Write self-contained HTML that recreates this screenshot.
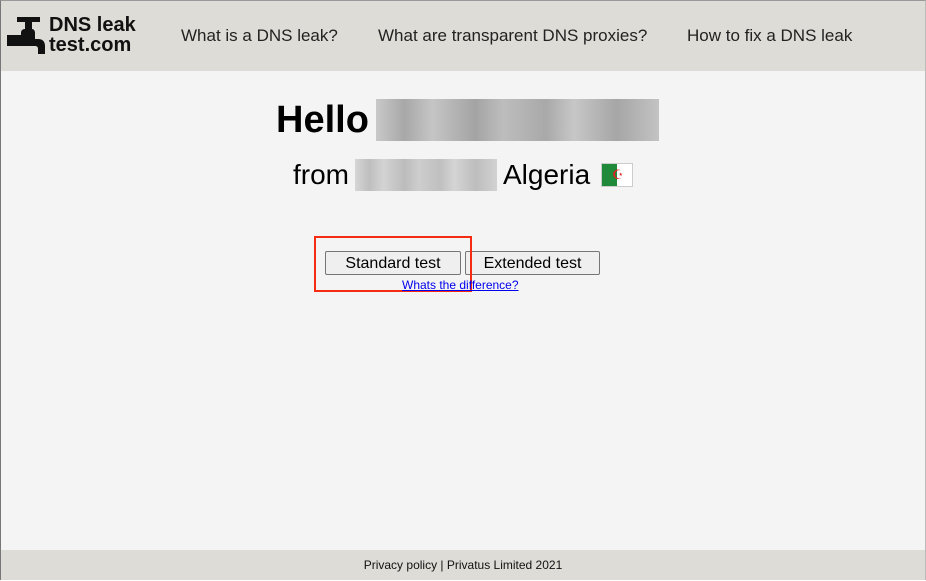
<!DOCTYPE html>
<html><head><style>
body{margin:0;width:926px;height:581px;overflow:hidden;background:#fff;font-family:"Liberation Sans",Arial,sans-serif;}
#pg{position:absolute;left:0;top:0;width:924px;height:579px;border-left:1px solid #777;border-top:1px solid #999;border-right:1px solid #bbb;background:#f4f4f4;}
#hd{position:absolute;left:0;top:0;width:924px;height:70px;background:#dddcd6;}
.nav{position:absolute;top:25px;font-size:17px;color:#222;}
#ft{position:absolute;left:0;top:549px;width:924px;height:30px;background:#dddcd6;font-size:12px;color:#111;text-align:center;line-height:30px;}
.blur{position:absolute;background:linear-gradient(90deg,#c9c9c9,#a8a8a8 10%,#c5c5c5 20%,#a4a4a4 35%,#bdbdbd 45%,#a9a9a9 60%,#c7c7c7 70%,#a6a6a6 85%,#c3c3c3);}
.btn{position:absolute;top:250px;height:24px;border:1px solid #767676;border-radius:2px;background:#efefef;font-size:16px;line-height:23px;text-align:center;color:#000;box-sizing:border-box;}
</style></head><body>
<div id="pg">
<div id="hd">
<svg style="position:absolute;left:5px;top:14px" width="40" height="42" viewBox="0 0 40 42">
<path d="M11 2h23v5h-8v7c2 0 3 2 3 4v6h3c5 0 7 3 7 7v8h-7v-5c0-2-1-3-3-3H1V20h14v-2c0-2 1-4 4-4V7h-8z" fill="#111"/>
</svg>
<div style="position:absolute;left:48px;top:14px;font-weight:bold;font-size:20px;line-height:20px;color:#111;">DNS leak<br>test.com</div>
<div class="nav" style="left:180px">What is a DNS leak?</div>
<div class="nav" style="left:377px">What are transparent DNS proxies?</div>
<div class="nav" style="left:686px">How to fix a DNS leak</div>
</div>
<div style="position:absolute;left:275px;top:98px;font-size:38px;font-weight:bold;color:#000">Hello</div>
<div class="blur" style="left:375px;top:98px;width:283px;height:42px"></div>
<div style="position:absolute;left:292px;top:158px;font-size:28px;color:#000">from</div>
<div class="blur" style="left:354px;top:158px;width:142px;height:32px;opacity:.7"></div>
<div style="position:absolute;left:502px;top:158px;font-size:28px;color:#000">Algeria</div>
<div style="position:absolute;left:600px;top:162px;width:30px;height:22px;border:1px solid #ccc;background:linear-gradient(90deg,#1f8a3a 50%,#fff 50%)"><span style="position:absolute;left:10px;top:3px;color:#d22;font-size:13px">☪</span></div>
<div class="btn" style="left:324px;width:136px">Standard test</div>
<div class="btn" style="left:464px;width:135px">Extended test</div>
<div style="position:absolute;left:313px;top:235px;width:154px;height:52px;border:2px solid #f52b12"></div>
<a style="position:absolute;left:401px;top:277px;font-size:12px;color:#00e;text-decoration:underline">Whats the difference?</a>
<div id="ft">Privacy policy | Privatus Limited 2021</div>
</div>
</body></html>
